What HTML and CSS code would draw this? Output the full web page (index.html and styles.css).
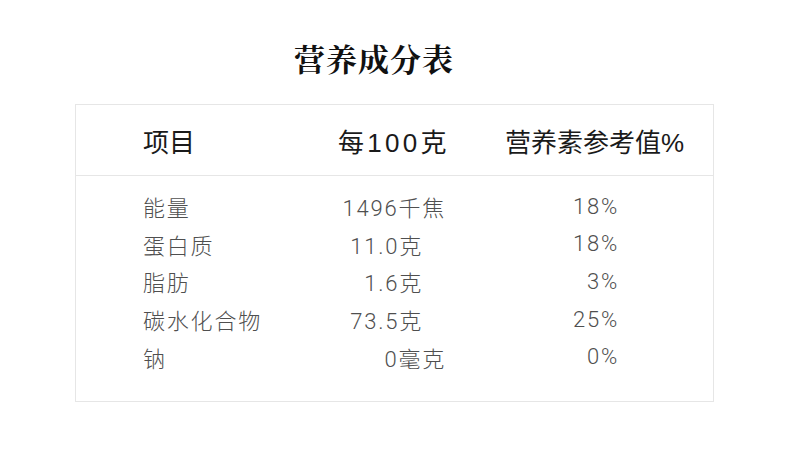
FILE: index.html
```html
<!DOCTYPE html>
<html lang="zh-CN">
<head>
<meta charset="utf-8">
<title>营养成分表</title>
<link rel="stylesheet" href="styles.css">
</head>
<body>
<div class="page">
  <h1 class="title">营养成分表</h1>
  <div class="table">
    <div class="head">
      <span class="h1">项目</span>
      <span class="h2">每100克</span>
      <span class="h3">营养素参考值%</span>
    </div>
    <div class="rows">
      <div class="row"><span class="c1">能量</span><span class="c2">1496千焦</span><span class="c3">18%</span></div>
      <div class="row"><span class="c1">蛋白质</span><span class="c2 inset">11.0克</span><span class="c3">18%</span></div>
      <div class="row"><span class="c1">脂肪</span><span class="c2 inset">1.6克</span><span class="c3">3%</span></div>
      <div class="row"><span class="c1">碳水化合物</span><span class="c2 inset">73.5克</span><span class="c3">25%</span></div>
      <div class="row"><span class="c1">钠</span><span class="c2">0毫克</span><span class="c3">0%</span></div>
    </div>
  </div>
</div>
</body>
</html>
```
FILE: styles.css
```css
html, body {
  margin: 0;
  padding: 0;
  background: #fff;
}
.page {
  width: 790px;
  height: 467px;
  padding-top: 38px;
  box-sizing: border-box;
  font-family: "Liberation Sans", "Noto Sans CJK SC", sans-serif;
}
.title {
  margin: 0;
  padding-left: 294px;
  height: 40px;
  line-height: 40px;
  font-family: "Noto Serif CJK SC", "Noto Sans CJK SC", serif;
  font-size: 31px;
  font-weight: 700;
  color: #111;
  letter-spacing: 1px;
}
.table {
  margin: 26px 0 0 75px;
  width: 639px;
  height: 298px;
  box-sizing: border-box;
  border: 1px solid #e6e6e6;
}
.head {
  height: 70px;
  border-bottom: 1px solid #e6e6e6;
  display: flex;
  align-items: center;
  font-size: 26px;
  color: #1a1a1a;
  white-space: nowrap;
}
.h1 { padding-left: 67px; width: 195px; flex: none; }
.h2 { width: 167px; flex: none; letter-spacing: 3.3px; }
.h3 { letter-spacing: 0; }
.rows {
  padding-top: 11.5px;
  display: flex;
  flex-direction: column;
}
.row {
  display: flex;
  height: 37.6px;
  align-items: center;
  font-family: Roboto, "Noto Sans CJK SC", sans-serif;
  font-size: 22px;
  font-weight: 300;
  color: #4f4f4f;
  letter-spacing: 1.8px;
  white-space: nowrap;
}
.c1 { padding-left: 67px; width: 194px; flex: none; }
.c2 { width: 109px; flex: none; text-align: right; }
.c2.inset { width: 86px; padding-right: 23px; }
.c3 { width: 173px; flex: none; text-align: right; }
```
